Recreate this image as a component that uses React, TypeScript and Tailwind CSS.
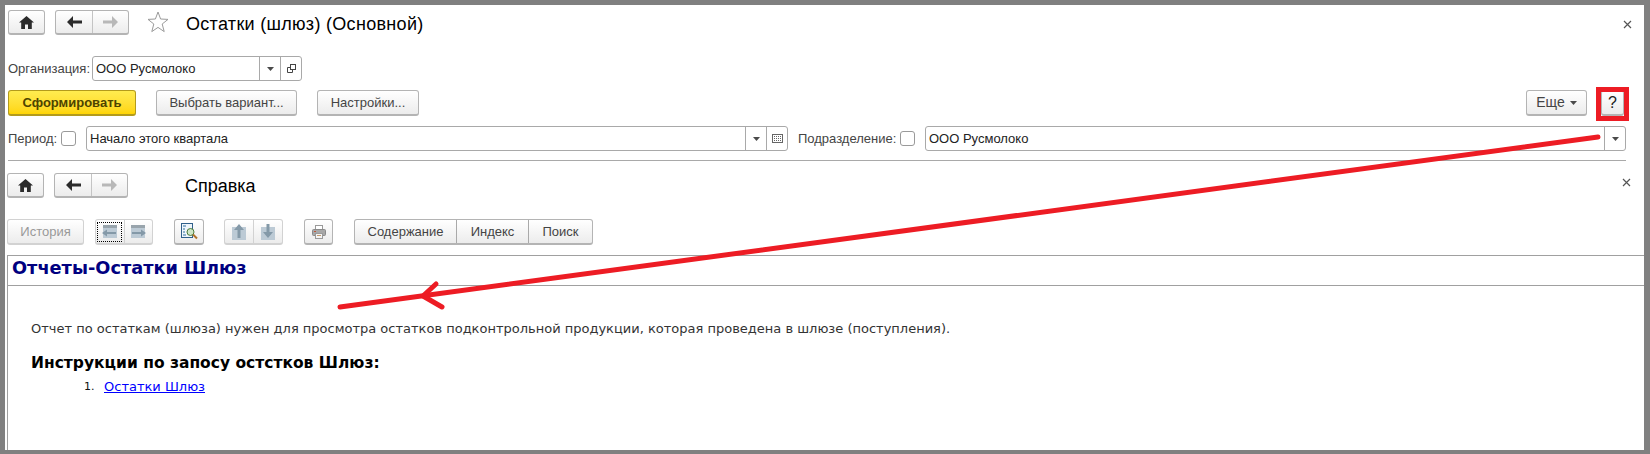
import React from 'react';

const HomeIcon = () => (
  <svg width="15" height="13" viewBox="0 0 15 13">
    <path d="M7.5 0 L15 6.5 L12.8 6.5 L12.8 13 L9 13 L9 8.5 L6 8.5 L6 13 L2.2 13 L2.2 6.5 L0 6.5 Z" fill="#2b2b2b" />
  </svg>
);

const ArrowIcon = ({ dir, color }: { dir: 'left' | 'right'; color: string }) => (
  <svg width="15" height="12" viewBox="0 0 15 12">
    <path
      d={dir === 'left' ? 'M0 6 L6 0 L6 4.5 L15 4.5 L15 7.5 L6 7.5 L6 12 Z' : 'M15 6 L9 0 L9 4.5 L0 4.5 L0 7.5 L9 7.5 L9 12 Z'}
      fill={color}
    />
  </svg>
);

const Caret = () => (
  <svg width="7" height="4" viewBox="0 0 7 4">
    <path d="M0 0 H7 L3.5 4 Z" fill="#4a4a4a" />
  </svg>
);

const Close = () => (
  <svg width="9" height="9" viewBox="0 0 9 9">
    <path d="M1 1 L8 8 M8 1 L1 8" stroke="#555" strokeWidth="1.2" fill="none" />
  </svg>
);

const btn = 'flex items-center justify-center rounded-[3px] border border-[#b4b4b4] border-b-2 bg-gradient-to-b from-white to-[#ececec]';
const btnOff = 'flex items-center justify-center rounded-[3px] border border-[#d2d2d2] border-b-2 bg-gradient-to-b from-white to-[#ececec]';

const NavButtons = () => (
  <>
    <div className={`${btn} h-[25px] w-[37px]`}>
      <HomeIcon />
    </div>
    <div className={`${btn} ml-[10px] h-[25px] w-[74px]`}>
      <div className="flex h-full w-[37px] items-center justify-center border-r border-[#c4c4c4]">
        <ArrowIcon dir="left" color="#2b2b2b" />
      </div>
      <div className="flex h-full flex-1 items-center justify-center">
        <ArrowIcon dir="right" color="#b8b8b8" />
      </div>
    </div>
  </>
);

const Field = ({ text, className, calendar, copy }: { text: string; className: string; calendar?: boolean; copy?: boolean }) => (
  <div className={`flex h-[25px] items-center rounded-[3px] border border-[#a9a9a9] bg-white ${className}`}>
    <span className="flex-1 pl-[3px] text-[13px] text-[#222]">{text}</span>
    <div className="flex h-full w-[21px] items-center justify-center border-l border-[#a9a9a9]">
      <Caret />
    </div>
    {calendar && (
      <div className="flex h-full w-[21px] items-center justify-center border-l border-[#a9a9a9]">
        <svg width="11" height="9" viewBox="0 0 11 9">
          <rect x="0.5" y="0.5" width="10" height="8" fill="#fff" stroke="#666" />
          <path d="M2 2.5 H9 M2 4.5 H9 M2 6.5 H9" stroke="#666" strokeDasharray="1 1" />
        </svg>
      </div>
    )}
    {copy && (
      <div className="flex h-full w-[21px] items-center justify-center border-l border-[#a9a9a9]">
        <svg width="9" height="9" viewBox="0 0 9 9">
          <rect x="3.5" y="0.5" width="5" height="5" fill="#fff" stroke="#444" />
          <path d="M3.5 3.5 H0.5 V8.5 H5.5 V5.5" fill="none" stroke="#444" />
        </svg>
      </div>
    )}
  </div>
);

const Checkbox = () => <div className="h-[15px] w-[15px] rounded-[3px] border border-[#9a9a9a] bg-white" />;

const TextButton = ({ label, className }: { label: string; className: string }) => (
  <div className={`${btn} h-[26px] text-[13px] text-[#444] ${className}`}>{label}</div>
);

const PaneIcon = ({ flip }: { flip?: boolean }) => (
  <svg width="16" height="15" viewBox="0 0 16 15">
    <rect x="1" y="1" width="14" height="13" fill="#bccad5" />
    <rect x="1" y="1" width="14" height="3" fill="#98a4ac" />
    <path d={flip ? 'M16 9 L11 5.5 V8 H2 V10 H11 V12.5 Z' : 'M0 9 L5 5.5 V8 H14 V10 H5 V12.5 Z'} fill="#8499a8" />
  </svg>
);

const UpDownIcon = ({ down }: { down?: boolean }) => (
  <svg width="14" height="16" viewBox="0 0 14 16">
    <rect x="0" y="3" width="14" height="13" fill="#bccad5" />
    <path d={down ? 'M7 14 L2 8 H5.5 V0 H8.5 V8 H12 Z' : 'M7 0 L2 6 H5.5 V14 H8.5 V6 H12 Z'} fill="#8499a8" />
  </svg>
);

const App = () => (
  <div className="relative flex h-[454px] w-[1650px] flex-col overflow-hidden border-t-[5px] border-r-[6px] border-b-[4px] border-l-[5px] border-[#808080] bg-white font-['Liberation_Sans',sans-serif]">
    {/* main form */}
    <div className="flex h-[30px] items-start pt-[5px] pl-[3px]">
      <NavButtons />
      <svg className="mt-[1px] ml-[18px]" width="22" height="22" viewBox="0 0 22 22">
        <path d="M11 1 L13.6 8 L21 8.4 L15.2 13 L17.2 20.6 L11 16.4 L4.8 20.6 L6.8 13 L1 8.4 L8.4 8 Z" fill="#fff" stroke="#9a9a9a" />
      </svg>
      <span className="ml-[17px] text-[18px] leading-[28px] tracking-[0.3px] text-black">Остатки (шлюз) (Основной)</span>
      <div className="mt-[10px] mr-[12px] ml-auto">
        <Close />
      </div>
    </div>

    <div className="mt-[21px] flex items-center pl-[3px]">
      <span className="w-[84px] text-[13px] text-[#444]">Организация:</span>
      <Field text="ООО Русмолоко" className="w-[210px]" copy />
    </div>

    <div className="mt-[9px] flex items-center pr-[20px] pl-[3px]">
      <div className="flex h-[26px] w-[128px] items-center justify-center rounded-[3px] border border-b-2 border-[#b39b1c] bg-gradient-to-b from-[#ffec4f] to-[#ffd500] text-[13px] font-bold text-[#4d4300]">
        Сформировать
      </div>
      <TextButton label="Выбрать вариант..." className="ml-[20px] w-[141px]" />
      <TextButton label="Настройки..." className="ml-[20px] w-[102px]" />
      <div className={`${btn} ml-auto h-[26px] w-[61px] gap-[5px] text-[14px] text-[#444]`}>
        Еще <Caret />
      </div>
      <div className={`${btn} ml-[14px] h-[26px] w-[23px] text-[16px] text-[#222]`}>?</div>
    </div>

    <div className="mt-[10px] flex items-center pr-[18px] pl-[3px]">
      <span className="w-[53px] text-[13px] text-[#444]">Период:</span>
      <Checkbox />
      <Field text="Начало этого квартала" className="ml-[10px] w-[702px]" calendar />
      <span className="ml-[10px] w-[102px] text-[13px] text-[#444]">Подразделение:</span>
      <Checkbox />
      <Field text="ООО Русмолоко" className="ml-[10px] flex-1" />
    </div>

    <div className="mt-[9px] mr-[18px] ml-[3px] h-px bg-[#a9a9a9]" />

    {/* help pane */}
    <div className="mt-[12px] flex h-[26px] items-start pl-[2px]">
      <NavButtons />
      <span className="ml-[57px] text-[18px] leading-[26px] text-black">Справка</span>
      <div className="mt-[5px] mr-[13px] ml-auto">
        <Close />
      </div>
    </div>

    <div className="mt-[20px] flex items-center pl-[2px]">
      <div className={`${btnOff} h-[26px] w-[77px] text-[13px] text-[#999]`}>История</div>
      <div className={`${btnOff} ml-[11px] h-[26px] w-[58px]`}>
        <div className="flex h-full flex-1 items-center justify-center border-r border-[#d2d2d2]">
          <div className="flex h-[20px] w-[25px] items-center justify-center border border-dotted border-black">
            <PaneIcon />
          </div>
        </div>
        <div className="flex h-full flex-1 items-center justify-center">
          <PaneIcon flip />
        </div>
      </div>
      <div className={`${btn} ml-[21px] h-[26px] w-[30px]`}>
        <svg width="17" height="17" viewBox="0 0 17 17">
          <rect x="0.5" y="0.5" width="11" height="14" fill="#eef5fb" stroke="#2f5f8a" />
          <path d="M2 3 H5 M2 6 H4 M2 9 H4 M2 12 H5" stroke="#2f6f9f" />
          <circle cx="9.5" cy="9" r="3.5" fill="#cfe6c8" stroke="#4a7a3a" />
          <path d="M12 11.5 L16 15.5" stroke="#b0722a" strokeWidth="2" />
        </svg>
      </div>
      <div className={`${btnOff} ml-[20px] h-[26px] w-[59px]`}>
        <div className="flex h-full flex-1 items-center justify-center border-r border-[#d2d2d2]">
          <UpDownIcon />
        </div>
        <div className="flex h-full flex-1 items-center justify-center">
          <UpDownIcon down />
        </div>
      </div>
      <div className={`${btn} ml-[21px] h-[26px] w-[29px]`}>
        <svg width="14" height="14" viewBox="0 0 14 14">
          <rect x="3.5" y="0.5" width="7" height="4" fill="#fff" stroke="#999" />
          <rect x="0.5" y="4.5" width="13" height="6" rx="1" fill="#a8a8a8" stroke="#8a8a8a" />
          <rect x="2" y="6" width="2" height="1" fill="#c0563a" />
          <rect x="3.5" y="8.5" width="7" height="5" fill="#f4f4f4" stroke="#9a9a9a" />
          <path d="M5 10.5 H9" stroke="#c49a6c" />
        </svg>
      </div>
      <div className={`${btn} ml-[21px] h-[26px] w-[239px] text-[13px] text-[#444]`}>
        <div className="flex h-full w-[102px] items-center justify-center border-r border-[#a9a9a9]">Содержание</div>
        <div className="flex h-full w-[72px] items-center justify-center border-r border-[#a9a9a9]">Индекс</div>
        <div className="flex h-full flex-1 items-center justify-center">Поиск</div>
      </div>
    </div>

    {/* help document */}
    <div className="mt-[10px] ml-[2px] flex min-h-0 flex-1 flex-col border-t border-l border-[#a0a0a0] font-['DejaVu_Sans',sans-serif]">
      <div className="flex h-[30px] items-center border-b border-[#a0a0a0] pb-[4px] pl-[4px] text-[17.75px] font-bold text-[#000080]">
        Отчеты-Остатки Шлюз
      </div>
      <p className="mt-[35px] ml-[23px] text-[13px] leading-[16px] text-[#333]">
        Отчет по остаткам (шлюза) нужен для просмотра остатков подконтрольной продукции, которая проведена в шлюзе (поступления).
      </p>
      <h2 className="mt-[16px] ml-[23px] text-[15.5px] leading-[20px] font-bold text-black">Инструкции по запосу остстков Шлюз:</h2>
      <div className="mt-[6px] ml-[76px] flex text-[11px] leading-[16px] text-[#111]">
        <span className="w-[20px]">1.</span>
        <a className="text-[13px] text-[#0000ff] underline">Остатки Шлюз</a>
      </div>
    </div>

    {/* annotation */}
    <svg className="pointer-events-none absolute -top-[5px] -left-[5px]" width="1650" height="454" viewBox="0 0 1650 454">
      <rect x="1598.5" y="89.5" width="28" height="29" fill="none" stroke="#ed1c24" strokeWidth="5" />
      <path d="M1598 137 L340 307" stroke="#ed1c24" strokeWidth="5" strokeLinecap="round" fill="none" />
      <path d="M436 284 L423 296 L442 307" stroke="#ed1c24" strokeWidth="5" strokeLinecap="round" strokeLinejoin="round" fill="none" />
    </svg>
  </div>
);

export default App;
